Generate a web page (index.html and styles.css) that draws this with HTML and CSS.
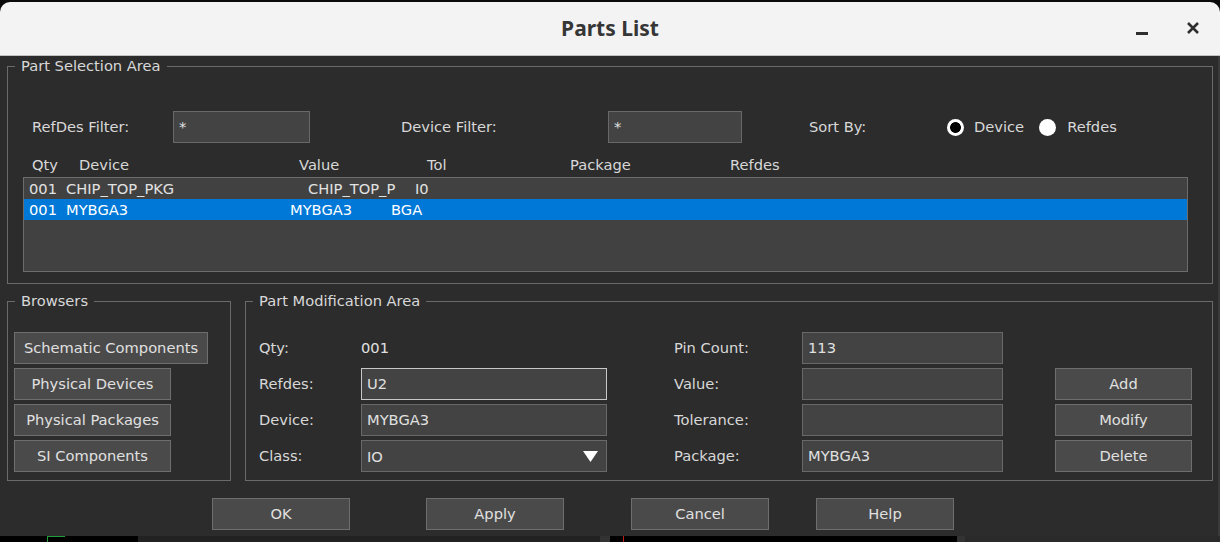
FILE: index.html
```html
<!DOCTYPE html>
<html>
<head>
<meta charset="utf-8">
<title>Parts List</title>
<link rel="stylesheet" href="styles.css">
</head>
<body>
<div class="window">
  <header class="titlebar">
    <div class="title">Parts List</div>
    <div class="controls">
      <span class="min"></span>
      <svg class="close" width="14" height="14" viewBox="0 0 14 14"><path d="M2 2L12 12M12 2L2 12" stroke="#2e2e2e" stroke-width="2.6" stroke-linecap="butt" fill="none"/></svg>
    </div>
  </header>
  <main class="content">
    <fieldset class="group">
      <legend>Part Selection Area</legend>
      <div class="sel-body">
        <div class="filters">
          <span class="lbl-a">RefDes Filter:</span>
          <div class="field f-a">*</div>
          <span class="lbl-b">Device Filter:</span>
          <div class="field f-b">*</div>
          <span class="lbl-c">Sort By:</span>
          <div class="radios">
            <span class="radio on"></span><span class="rtext">Device</span>
            <span class="radio r2"></span><span class="rtext">Refdes</span>
          </div>
        </div>
        <div class="cols">
          <span class="c-qty">Qty</span>
          <span class="c-dev">Device</span>
          <span class="c-val">Value</span>
          <span class="c-tol">Tol</span>
          <span class="c-pkg">Package</span>
          <span class="c-ref">Refdes</span>
        </div>
        <div class="list">
          <div class="row">
            <span style="width:37px">001</span><span style="width:242px">CHIP_TOP_PKG</span><span style="width:107px">CHIP_TOP_P</span><span>I0</span>
          </div>
          <div class="row selected">
            <span style="width:37px">001</span><span style="width:224px">MYBGA3</span><span style="width:101px">MYBGA3</span><span>BGA</span>
          </div>
        </div>
      </div>
    </fieldset>

    <div class="lower">
      <fieldset class="group browsers">
        <legend>Browsers</legend>
        <div class="browse-body">
          <button class="btn btn-wide">Schematic Components</button>
          <button class="btn btn-std">Physical Devices</button>
          <button class="btn btn-std">Physical Packages</button>
          <button class="btn btn-std">SI Components</button>
        </div>
      </fieldset>
      <fieldset class="group modify">
        <legend>Part Modification Area</legend>
        <div class="mod-body">
          <span>Qty:</span>
          <span class="plain">001</span>
          <span>Pin Count:</span>
          <div class="field w2">113</div>
          <span></span>

          <span>Refdes:</span>
          <div class="field w1 focused">U2</div>
          <span>Value:</span>
          <div class="field w2"></div>
          <button class="btn btn-act">Add</button>

          <span>Device:</span>
          <div class="field w1">MYBGA3</div>
          <span>Tolerance:</span>
          <div class="field w2"></div>
          <button class="btn btn-act">Modify</button>

          <span>Class:</span>
          <div class="field w1 combo"><span>IO</span><svg class="arrow" width="15" height="11" viewBox="0 0 15 11"><path d="M0 0H15L7.5 11Z" fill="#ffffff"/></svg></div>
          <span>Package:</span>
          <div class="field w2">MYBGA3</div>
          <button class="btn btn-act">Delete</button>
        </div>
      </fieldset>
    </div>

    <div class="actions">
      <button class="btn">OK</button>
      <button class="btn a-apply">Apply</button>
      <button class="btn a-cancel">Cancel</button>
      <button class="btn a-help">Help</button>
    </div>
  </main>
  <div class="desktop">
    <div class="d1"><span class="green"></span></div>
    <div class="d2"></div>
    <div class="d3"></div>
    <div class="d4"><span class="red"></span></div>
    <div class="d5"></div>
    <div class="d6"></div>
  </div>
</div>
</body>
</html>
```
FILE: styles.css
```css
* { box-sizing: border-box; }
html, body { margin: 0; padding: 0; }
body {
  background: #0a0a0a;
  width: 1220px;
  height: 542px;
  overflow: hidden;
  font-family: "DejaVu Sans", sans-serif;
  font-size: 14.67px;
  color: #d8d8d8;
}
.window { margin-top: 2px; width: 1220px; }

.titlebar {
  height: 54px;
  background: #f3f3f3;
  border-radius: 10px 10px 0 0;
  border-bottom: 1px solid #c2c2c2;
  display: grid;
  grid-template-columns: 1fr auto 1fr;
  align-items: center;
}
.title {
  grid-column: 2;
  font-family: "Noto Sans", "Open Sans", sans-serif;
  font-weight: 700;
  font-size: 21px;
  color: #363636;
  margin-top: -2px;
}
.controls {
  grid-column: 3;
  justify-self: end;
  display: flex;
  align-items: center;
  padding-right: 20px;
}
.min {
  width: 12px;
  height: 3px;
  background: #2e2e2e;
  margin-top: 9px;
  margin-right: 38px;
}
.close { display: block; margin-top: -1px; }

.content {
  background: #2c2c2c;
  padding: 1px 5px 6px 7px;
  border-right: 2px solid #3a3a3a;
}

fieldset.group {
  margin: 0;
  padding: 0;
  border: 1px solid #6a6a6a;
  min-width: 0;
}
legend {
  margin-left: 7px;
  padding: 0 6px;
  line-height: 18px;
  color: #d8d8d8;
}

.sel-body { padding: 36px 24px 11px 15px; }
.filters {
  display: flex;
  align-items: center;
  height: 32px;
  padding-left: 9px;
}
.filters > span { padding-bottom: 2px; }
.lbl-a { width: 141px; }
.f-a { width: 137px; }
.lbl-b { margin-left: 91px; width: 207px; }
.f-b { width: 134px; }
.lbl-c { margin-left: 67px; width: 138px; }

.field {
  height: 32px;
  background: #434343;
  border: 1px solid #686868;
  padding-left: 5px;
  line-height: 29px;
  color: #e0e0e0;
  white-space: nowrap;
}
.field.focused { border-color: #c8c8c8; }
.combo { display: flex; align-items: center; justify-content: space-between; padding-right: 8px; }
.arrow { display: block; }

.radios { display: flex; align-items: center; }
.radio {
  width: 17px;
  height: 17px;
  border-radius: 50%;
  background: #ffffff;
}
.radio.on { background: radial-gradient(circle, #000 0 5px, #fff 5.8px); }
.rtext { margin-left: 10px; padding-bottom: 2px; }
.radio.r2 { margin-left: 15px; }
.radio.r2 + .rtext { margin-left: 11px; }

.cols {
  display: flex;
  margin-top: 14px;
  height: 18px;
  line-height: 16px;
  padding-left: 9px;
}
.c-qty { width: 47px; }
.c-dev { width: 220px; }
.c-val { width: 128px; }
.c-tol { width: 143px; }
.c-pkg { width: 160px; }

.list {
  margin-top: 2px;
  height: 95px;
  background: #414141;
  border: 1px solid #6c6c6c;
}
.row {
  display: flex;
  height: 21px;
  line-height: 21px;
  padding-left: 5px;
  color: #e2e2e2;
  white-space: pre;
}
.row span { flex: none; }
.row.selected { background: #0078d7; color: #ffffff; }

.lower { display: flex; gap: 14px; margin-top: 8px; }
.browsers { width: 224px; flex: none; }
.modify { flex: 1; }

.browse-body {
  padding: 22px 0 8px 6px;
  display: flex;
  flex-direction: column;
  align-items: flex-start;
  gap: 4px;
}
.btn {
  height: 32px;
  background: #4a4a4a;
  border: 1px solid #6e6e6e;
  color: #e0e0e0;
  font: inherit;
  padding: 0 0 2px;
  display: flex;
  align-items: center;
  justify-content: center;
  border-radius: 0;
}
.btn-wide { width: 194px; }
.btn-std { width: 157px; }
.btn-act { width: 137px; }

.mod-body {
  padding: 22px 0 8px 13px;
  display: grid;
  grid-template-columns: 102px 313px 128px 253px 137px;
  grid-auto-rows: 32px;
  row-gap: 4px;
  align-items: center;
}
.mod-body > span { padding-bottom: 2px; }
.w1 { width: 246px; }
.w2 { width: 201px; }
.plain { color: #e0e0e0; }

.actions { display: flex; margin-top: 17px; padding-left: 205px; }
.actions .btn { width: 138px; }
.a-apply { margin-left: 76px; }
.a-cancel { margin-left: 67px; }
.a-help { margin-left: 47px; }

.desktop { display: flex; height: 6px; }
.desktop div { height: 6px; }
.d1 { width: 138px; background: #000; }
.d2 { width: 462px; background: #222; }
.d3 { width: 10px; background: #333; }
.d4 { width: 347px; background: #000; }
.d5 { width: 8px; background: #333; }
.d6 { flex: 1; background: #2a2a2a; }
.green { display: block; margin-left: 47px; width: 18px; height: 6px; border-top: 1px solid #1f9e3a; border-left: 1px solid #1f9e3a; }
.red { display: block; margin-left: 13px; width: 1px; height: 6px; background: #c21a1a; }
```
